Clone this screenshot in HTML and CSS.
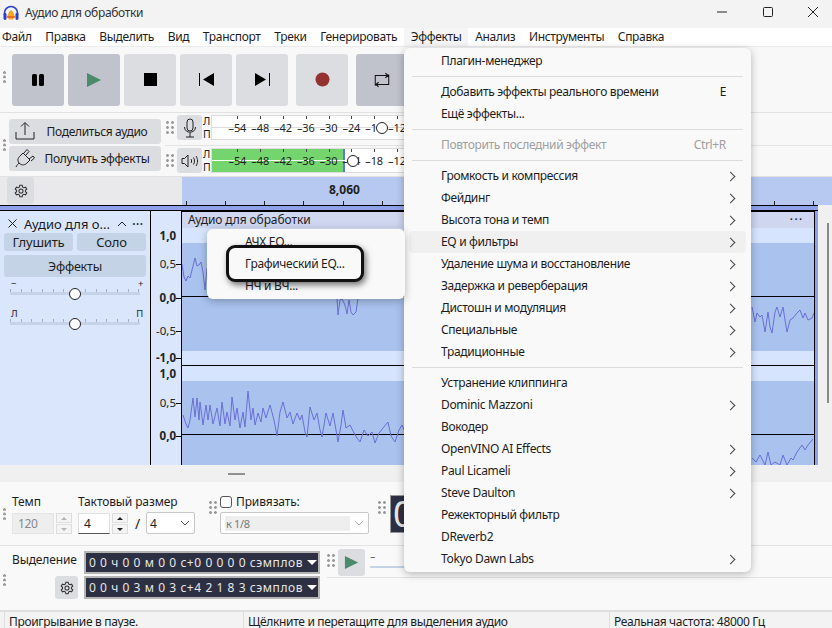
FILE: index.html
```html
<!DOCTYPE html>
<html lang="ru">
<head>
<meta charset="utf-8">
<title>Аудио для обработки</title>
<link rel="stylesheet" href="styles.css">
</head>
<body>
<div class="app">
  <header class="titlebar">
    <svg class="appicon" width="16" height="16" viewBox="0 0 16 16"><path d="M1.500 10V8a6.500 6.500 0 0 1 13 0v2" fill="none" stroke="#2a3fc7" stroke-width="1.600"/><rect x="0.500" y="8" width="3" height="7" rx="1.400" fill="#2a3fc7"/><rect x="12.500" y="8" width="3" height="7" rx="1.400" fill="#2a3fc7"/><path d="M4 11.500 6 7l2-2 2 2 2 4.500-2 3H6z" fill="#f5a623"/><path d="M4 11.500h8v1H4z" fill="#e0301e"/></svg>
    <span class="wintitle">Аудио для обработки</span>
    <div class="winctl">
      <svg width="12" height="12" viewBox="0 0 12 12"><path d="M1 6h10" stroke="#222" fill="none"/></svg>
      <svg width="12" height="12" viewBox="0 0 12 12"><rect x="1.500" y="1.500" width="9" height="9" rx="1" stroke="#222" fill="none"/></svg>
      <svg width="12" height="12" viewBox="0 0 12 12"><path d="M1 1l10 10M11 1 1 11" stroke="#222" fill="none"/></svg>
    </div>
  </header>
  <nav class="menubar">
    <span>Файл</span><span>Правка</span><span>Выделить</span><span>Вид</span><span>Транспорт</span><span>Треки</span><span>Генерировать</span><span class="open">Эффекты</span><span>Анализ</span><span>Инструменты</span><span>Справка</span>
  </nav>

  <section class="transport">
    <i class="grip single"></i>
    <button class="tbtn on"><svg width="14" height="14" viewBox="0 0 14 14"><rect x="1" y="1" width="5" height="12" rx="1.500"/><rect x="8" y="1" width="5" height="12" rx="1.500"/></svg></button>
    <button class="tbtn on"><svg width="16" height="16" viewBox="0 0 16 16"><path d="M1 1l14 7-14 7z" fill="#4b8a6b"/></svg></button>
    <button class="tbtn"><svg width="13" height="13" viewBox="0 0 13 13"><rect width="13" height="13"/></svg></button>
    <button class="tbtn"><svg width="15" height="13" viewBox="0 0 15 13"><path d="M0.500 0v13" stroke="#000" fill="none"/><path d="M15 0v13L4 6.500z"/></svg></button>
    <button class="tbtn"><svg width="15" height="13" viewBox="0 0 15 13"><path d="M14.500 0v13" stroke="#000" fill="none"/><path d="M0 0v13l11-6.500z"/></svg></button>
    <button class="tbtn rec"><svg width="15" height="15" viewBox="0 0 15 15"><circle cx="7.500" cy="7.500" r="7" fill="#943232"/></svg></button>
    <button class="tbtn on"><svg width="18" height="18" viewBox="0 0 16 16" fill="none" stroke="#111" stroke-width=".9"><path d="M2 13V4h11M11 2l2.500 2L11 6M14 3v9H3M5 10l-2.500 2L5 14"/></svg></button>
  </section>

  <section class="devices">
    <div class="sharecol">
      <i class="grip single"></i>
      <div class="sharebtns">
        <button class="share"><svg width="20" height="20" viewBox="0 0 20 20" fill="none" stroke="#222"><path d="M1 11v7h18v-7M10 14V2M6 5.500 10 1.500l4 4"/></svg><span>Поделиться аудио</span></button>
        <button class="share"><svg width="20" height="20" viewBox="0 0 20 20" fill="none" stroke="#222"><path d="M1 19c1-2 2-3 3-4M4 15c-2-3-1-5 1-7l3-3 7 7-3 3c-2 2-5 3-8 0zM8.500 5.500 12 1.500l2 2-3 3.500M14 11l4-3 1.500 2-3.500 3"/></svg><span>Получить эффекты</span></button>
      </div>
    </div>
    <div class="meters">
      <div class="meterrow first">
        <i class="grip double"></i>
        <button class="mbtn"><svg width="14" height="20" viewBox="0 0 14 20" fill="none" stroke="#222"><rect x="4" y="1" width="6" height="12" rx="3"/><path d="M1.500 9c0 7 11 7 11 0M7 15v4M3 19h8"/></svg></button>
        <div class="lr"><span>Л</span><span>П</span></div>
        <div class="meter">
          <div class="mid"></div>
          <div class="scale"><b>–54</b><b>–48</b><b>–42</b><b>–36</b><b>–30</b><b>–24</b><b>–18</b><b>–12</b></div>
          <i class="knob rk"></i>
        </div>
      </div>
      <div class="meterrow">
        <i class="grip double"></i>
        <button class="mbtn"><svg width="17" height="14" viewBox="0 0 17 14" fill="none" stroke="#222"><path d="M1 4.500h2.500L7 1v12L3.500 9.500H1zM10 5c.8 1 .8 3 0 4M12.500 3.500c1.300 2 1.300 5 0 7M15 2c2 3 2 7 0 10"/></svg></button>
        <div class="lr"><span>Л</span><span>П</span></div>
        <div class="meter play">
          <div class="green"></div>
          <div class="mid"></div>
          <div class="scale"><b>–54</b><b>–48</b><b>–42</b><b>–36</b><b>–30</b><b>–24</b><b>–18</b><b>–12</b></div>
          <i class="knob pk"></i>
        </div>
      </div>
    </div>
  </section>

  <section class="rulerbar">
    <div class="rulerleft"><button class="gear"><svg width="14" height="14" viewBox="0 0 24 24" fill="none" stroke="#333" stroke-width="1.800"><circle cx="12" cy="12" r="3.500"/><path d="M10 2h4l.6 3 2.400 1.400 2.900-1 2 3.500-2.300 2v2.200l2.300 2-2 3.500-2.900-1-2.400 1.400-.6 3h-4l-.6-3L7 17.600l-2.900 1-2-3.500 2.300-2v-2.200l-2.300-2 2-3.500 2.900 1L9.400 5z"/></svg></button></div>
    <div class="timeline"><span>8,060</span></div>
  </section>

  <section class="tracks">
    <div class="stripe"></div>
    <div class="trackrow">
      <aside class="panel">
        <div class="phead"><svg width="9" height="9" viewBox="0 0 9 9"><path d="M.5.500l8 8M8.500.500l-8 8" stroke="#222" fill="none"/></svg><span class="pname">Аудио для о...</span><svg width="10" height="6" viewBox="0 0 10 6"><path d="M1 5l4-4 4 4" stroke="#222" fill="none"/></svg><span class="pdots">···</span></div>
        <div class="pbtns"><button>Глушить</button><button>Соло</button></div>
        <button class="pfx">Эффекты</button>
        <div class="pscale"><span>−</span><span>+</span></div>
        <div class="pslider"><i></i></div>
        <div class="pscale second"><span>Л</span><span>П</span></div>
        <div class="pslider"><i></i></div>
      </aside>
      <div class="vruler">
        <b class="nt" style="top:18px">1,0</b><span style="top:46px">0,5</span><b style="top:80px">0,0</b><span style="top:113px">-0,5</span><b style="top:140px">-1,0</b>
        <b class="nt" style="top:156px">1,0</b><span style="top:185px">0,5</span><b style="top:218px">0,0</b>
      </div>
      <div class="wavecol">
        <div class="wtitle"><span>Аудио для обработки</span><span class="wdots">•••</span></div>
        <div class="lightband a"></div>
        <div class="dark"></div>
        <div class="lightband b"></div>
        <div class="lightband c"></div>
        <div class="dark"></div>
        <svg class="wave" width="632" height="253" viewBox="182 212 632 253" fill="none" stroke="#6a6fd8" stroke-width="1">
          <polyline points="182,264 184,277 186,281 188,276 190,278 192,270 195,258 197,266 199,265 201,262 203,272 205,290 207,268"/>
          <polyline points="337,299 338,315 340,300 342,299 345,305 347,314 349,300 351,312 353,315 356,312 358,298"/>
          <polyline points="752,307 755,322 757,313 760,317 762,315 765,332 768,312 770,327 772,333 775,312 777,307 780,317 783,307 785,320 787,332 790,320 793,318 797,313 800,310 803,318 805,313 808,320 812,318 814,313"/>
          <polyline points="183,415 186,424 188,428 190,420 193,398 195,417 197,398 199,420 200,402 203,425 206,405 208,420 210,405 213,424 217,408 220,426 222,402 225,424 227,412 230,426 232,397 235,420 237,408 240,428 243,412 245,427 248,391 251,420 253,408 255,425 258,413 261,422 263,408 266,418 270,405 274,420 277,436 280,412 283,402 287,418 290,412 293,424 297,413 300,420 302,415 305,432 307,437 310,407 314,420 317,413 320,430 322,437 326,413 330,426 333,413 336,430 338,442 341,425 343,410 346,428 350,425 354,433 357,438 360,442 364,430 368,436 372,432 375,443 379,433 383,428 388,422 391,436 395,442 399,430 402,425 405,432"/>
          <polyline points="752,458 756,462 760,455 765,465 768,452 771,465 775,462 780,465 783,455 787,465 791,458 793,460 797,452 802,445 805,450 808,445 813,439"/>
        </svg>
      </div>
      <div class="edge"></div>
      <div class="gutter"><i></i></div>
    </div>
  </section>

  <div class="sash"><i></i></div>

  <section class="bar1">
    <i class="grip single"></i>
    <div class="field tempo">
      <label>Темп</label>
      <div class="inline"><span class="num dis">120</span><span class="spin dis"><i class="up"></i><i class="down"></i></span></div>
    </div>
    <div class="field sig">
      <label>Тактовый размер</label>
      <div class="inline"><span class="num">4</span><span class="spin"><i class="up"></i><i class="down"></i></span><em>/</em><span class="sel"><span>4</span><svg width="10" height="6" viewBox="0 0 10 6"><path d="M1 1l4 4 4-4" stroke="#555" fill="none"/></svg></span></div>
    </div>
    <i class="grip double"></i>
    <div class="field snap">
      <div class="snapl"><i class="cb"></i><label>Привязать:</label></div>
      <span class="sel wide"><span class="selv">к 1/8</span><svg width="10" height="6" viewBox="0 0 10 6"><path d="M1 1l4 4 4-4" stroke="#aaa" fill="none"/></svg></span>
    </div>
    <i class="grip double"></i>
    <div class="clock">0</div>
  </section>

  <section class="bar2">
    <i class="grip single"></i>
    <div class="selcol">
      <label>Выделение</label>
      <button class="gear g2"><svg width="14" height="14" viewBox="0 0 24 24" fill="none" stroke="#333" stroke-width="1.800"><circle cx="12" cy="12" r="3.500"/><path d="M10 2h4l.6 3 2.400 1.400 2.900-1 2 3.500-2.300 2v2.200l2.300 2-2 3.500-2.900-1-2.400 1.400-.6 3h-4l-.6-3L7 17.600l-2.900 1-2-3.500 2.300-2v-2.200l-2.300-2 2-3.500 2.900 1L9.400 5z"/></svg></button>
    </div>
    <div class="times">
      <div class="time"><span>0 0 ч 0 0 м 0 0 с+0 0 0 0 0 <small>сэмплов</small></span><i></i></div>
      <div class="time"><span>0 0 ч 0 3 м 0 3 с+4 2 1 8 3 <small>сэмплов</small></span><i></i></div>
    </div>
    <div class="speed">
      <div class="speedtop">
        <i class="grip double"></i>
        <button class="pbtn"><svg width="15" height="15" viewBox="0 0 16 16"><path d="M1 1l14 7-14 7z" fill="#4b8a6b"/></svg></button>
        <div class="mini"><span>−</span><div></div></div>
      </div>
    </div>
  </section>

  <footer class="status">
    <span class="s1">Проигрывание в паузе.</span>
    <span class="s2">Щёлкните и перетащите для выделения аудио</span>
    <span class="s3">Реальная частота: 48000 Гц</span>
  </footer>
</div>

<div class="menu fx">
  <div class="mi"><span>Плагин-менеджер</span></div>
  <hr>
  <div class="mi"><span>Добавить эффекты реального времени</span><kbd>E</kbd></div>
  <div class="mi"><span>Ещё эффекты...</span></div>
  <hr>
  <div class="mi off"><span>Повторить последний эффект</span><kbd>Ctrl+R</kbd></div>
  <hr>
  <div class="mi sub"><span>Громкость и компрессия</span></div>
  <div class="mi sub"><span>Фейдинг</span></div>
  <div class="mi sub"><span>Высота тона и темп</span></div>
  <div class="mi sub hot"><span>EQ и фильтры</span></div>
  <div class="mi sub"><span>Удаление шума и восстановление</span></div>
  <div class="mi sub"><span>Задержка и реверберация</span></div>
  <div class="mi sub"><span>Дистошн и модуляция</span></div>
  <div class="mi sub"><span>Специальные</span></div>
  <div class="mi sub"><span>Традиционные</span></div>
  <hr>
  <div class="mi"><span>Устранение клиппинга</span></div>
  <div class="mi sub"><span>Dominic Mazzoni</span></div>
  <div class="mi"><span>Вокодер</span></div>
  <div class="mi sub"><span>OpenVINO AI Effects</span></div>
  <div class="mi sub"><span>Paul Licameli</span></div>
  <div class="mi sub"><span>Steve Daulton</span></div>
  <div class="mi"><span>Режекторный фильтр</span></div>
  <div class="mi"><span>DReverb2</span></div>
  <div class="mi sub"><span>Tokyo Dawn Labs</span></div>
</div>

<div class="menu eq">
  <div class="mi"><span>АЧХ EQ...</span></div>
  <div class="mi callout"><span>Графический EQ...</span></div>
  <div class="mi"><span>НЧ и ВЧ...</span></div>
</div>
</body>
</html>
```
FILE: styles.css
```css
* { box-sizing: border-box; }
html, body { margin: 0; padding: 0; }
body { width: 832px; height: 628px; overflow: hidden; position: relative; background: #f9f9f9; font-family: "Noto Sans", "Open Sans", sans-serif; font-size: 12px; letter-spacing: -.33px; color: #1c1c1c; }
button { font: inherit; letter-spacing: inherit; color: inherit; border: 0; padding: 0; background: #dcdde1; display: flex; align-items: center; justify-content: center; }
i, em, b { font-style: normal; display: block; }
.app { width: 832px; height: 628px; display: flex; flex-direction: column; overflow: hidden; }

.titlebar { height: 28px; background: #f3f3f3; display: flex; align-items: center; padding-left: 3px; flex: none; }
.appicon { margin-right: 6px; margin-top: -3px; }
.wintitle { color: #333; margin-top: -3px; }
.winctl { margin-left: auto; display: flex; gap: 33.500px; padding-right: 13px; margin-top: -4px; }
.winctl svg { display: block; }

.menubar { height: 18px; background: #fff; display: flex; flex: none; line-height: 18px; }
.menubar span { padding: 0 6.820px; }
.menubar span:first-child { padding-left: 2px; }
.menubar .open { background: #f5f5f5; }

.transport { height: 67px; flex: none; display: flex; align-items: center; gap: 4px; padding-left: 12px; border-top: 1px solid #ebebeb; border-bottom: 1px solid #e2e2e2; background: #f8f8f8; position: relative; }
.transport > .grip { position: absolute; left: 3px; top: 24px; }
.tbtn { width: 52px; height: 52px; border-radius: 3px; flex: none; }
.tbtn.on { background: #c0c2cc; }
.tbtn.rec { margin-left: 4px; margin-right: 4px; }
.grip { width: 3px; height: 12px; flex: none; background: radial-gradient(circle at 1.500px 1.500px, #9a9a9a 1.300px, transparent 1.500px) 0 0 / 3px 4.500px; }
.grip.double { width: 8px; height: 13px; background-size: 5px 5px; }

.devices { height: 64px; flex: none; display: flex; background: #f8f8f8; border-bottom: 1px solid #e2e2e2; }
.sharecol { width: 165px; flex: none; display: flex; align-items: center; padding-left: 3px; }
.sharecol > .grip.single { margin-right: 3px; }
.sharebtns { display: flex; flex-direction: column; gap: 2px; }
.share { width: 152px; height: 25px; border-radius: 3px; padding-left: 6px; justify-content: flex-start; }
.share svg { flex: none; }
.share span { flex: 1; text-align: center; padding-right: 2px; }
.meters { flex: 1; display: flex; flex-direction: column; }
.meterrow { height: 31px; display: flex; align-items: flex-start; padding: 2px 0 0 1px; border-top: 1px solid #e4e4e4; }
.meterrow.first { border-top: 0; height: 32px; }
.meterrow .grip { margin: 6px 3px 0 0; }
.mbtn { width: 25px; height: 25px; border-radius: 3px; flex: none; }
.lr { width: 9px; display: flex; flex-direction: column; font-size: 10.500px; line-height: 13px; padding-left: 1px; letter-spacing: 0; }
.meter { width: 440px; height: 25px; background: #fff; border: 1px solid #ddd; position: relative; flex: none; }
.meter .mid { position: absolute; left: 0; right: 0; top: 11px; height: 1px; background: #ddd; }
.meter.play .mid { background: #fff; top: 11px; }
.green { position: absolute; left: 0; top: 0; bottom: 0; width: 133px; background: #74d56f; border-right: 2px solid #5b78d6; }
.scale { position: absolute; left: 14px; top: 0; display: flex; height: 23px; align-items: center; }
.scale b { width: 22.800px; text-align: center; font-weight: 400; font-size: 11px; letter-spacing: -.1px; line-height: 15px; color: #222; position: relative; }
.scale b::before { content: ""; position: absolute; left: 50%; top: -4px; width: 1px; height: 3px; background: #444; }
.knob { position: absolute; width: 12px; height: 12px; border-radius: 50%; border: 1px solid #222; background: #fff; z-index: 1; top: 6px; }
.knob.rk { left: 164px; }
.knob.pk { left: 135px; }

.rulerbar { height: 28px; flex: none; display: flex; background: #e9e9ec; }
.rulerleft { width: 182px; flex: none; padding-left: 7px; }
.gear { width: 27px; height: 27px; border-radius: 3px; background: #dcdde1; }
.timeline { flex: 1; background: #b7c9f0 repeating-linear-gradient(90deg, transparent 0 3.800px, #222 3.800px 4.800px, transparent 4.800px 39.200px) 0 bottom / 100% 4px no-repeat; display: flex; }
.timeline span { font-weight: 700; margin-left: 147px; line-height: 26px; letter-spacing: 0; color: #222; }

.tracks { height: 260px; flex: none; display: flex; flex-direction: column; background: #f0f0f0; }
.stripe { height: 6px; flex: none; width: 818px; background: #8ea2ea; border-top: 1px solid #000; border-bottom: 1px solid #000; }
.trackrow { flex: 1; display: flex; min-height: 0; }
.panel { width: 151px; flex: none; background: #d9e6fb; border-right: 1px solid #000; padding: 0 4px; }
.phead { height: 22px; display: flex; align-items: center; padding: 3px 0 0 4px; }
.phead svg { flex: none; }
.pname { margin-left: 7px; font-size: 13px; letter-spacing: 0; flex: none; width: 93px; }
.pdots { margin-left: 5px; line-height: 1; font-size: 14px; letter-spacing: 0; }
.pbtns { display: flex; gap: 4px; }
.pbtns button { width: 69px; height: 18px; background: #c4d4e6; border-radius: 3px; font-size: 13px; letter-spacing: -.2px; line-height: 20px; }
.pfx { width: 142px; height: 22px; margin-top: 4px; background: #c4d4e6; border-radius: 3px; font-size: 12.500px; letter-spacing: -.2px; }
.pscale { display: flex; justify-content: space-between; font-size: 9.500px; padding: 0 3px 0 7px; margin-top: 1px; height: 12px; line-height: 12px; }
.pscale.second { margin-top: 13px; }
.pslider { height: 3px; margin: 2px 6px 1px; background: #c4d4e6; position: relative; }
.pslider::before { content: ""; position: absolute; left: 0; right: 0; top: -3px; height: 3px; background: repeating-linear-gradient(90deg, #9fb0c4 0 1px, transparent 1px 10.700px); }
.pslider i { position: absolute; left: 59px; top: -4px; width: 12px; height: 12px; border-radius: 50%; border: 1px solid #222; background: #fff; }
.vruler { width: 31px; flex: none; position: relative; background: #d9e6fb; border-right: 1px solid #000; }
.vruler b, .vruler span { position: absolute; right: 5px; font-size: 11.500px; line-height: 14px; letter-spacing: 0; color: #222; }
.vruler b::after, .vruler span::after { content: ""; position: absolute; left: 100%; top: 7px; width: 5px; height: 1px; background: #000; }
.vruler .nt::after { display: none; }
.wavecol { width: 633px; flex: none; display: flex; flex-direction: column; border-top: 1px solid #000; border-right: 1px solid #000; position: relative; background: #d6e4fd; overflow: hidden; }
.wtitle { height: 16px; flex: none; background: #ced6f0; display: flex; justify-content: space-between; align-items: center; padding: 0 10px 0 6px; line-height: 16px; letter-spacing: -.1px; }
.wdots { font-size: 7px; letter-spacing: 2px; }
.lightband.a { height: 15px; flex: none; }
.lightband.b { height: 14px; flex: none; }
.lightband.c { height: 16px; flex: none; border-top: 1px solid #000; }
.dark { height: 108px; flex: none; background: linear-gradient(#a9c2ee 53px, #000 53px, #000 54px, #a9c2ee 54px); }
.wave { position: absolute; left: 0; top: 0; }
.edge { width: 3px; flex: none; background: #8ea2ea; }
.gutter { flex: 1; padding: 12px 0 0 9px; }
.gutter i { width: 2px; height: 180px; background: #8a8a8a; }

.sash { height: 17px; flex: none; background: #f0f0f0; display: flex; align-items: center; padding-left: 228px; }
.sash i { width: 17px; height: 2px; background: #909090; }

.bar1 { height: 64px; flex: none; display: flex; border-bottom: 1px solid #e2e2e2; background: #f9f9f9; padding: 12px 0 0 3px; }
.bar1 > .grip.single { margin: 14px 6px 0 0; }
.field label { display: block; line-height: 16px; letter-spacing: -.12px; }
.inline { display: flex; align-items: center; margin-top: 2px; height: 22px; }
.tempo { width: 66px; }
.num { height: 21px; display: flex; align-items: center; width: 32px; padding-left: 5px; background: #fff; border: 1px solid #e0e0e0; border-bottom: 1px solid #555; flex: none; }
.num.dis { width: 42px; background: #eee; color: #888; border-color: #e4e4e4; }
.spin { width: 16px; height: 21px; margin-left: 2px; display: flex; flex-direction: column; gap: 1px; flex: none; }
.spin i { flex: 1; background: #f4f4f4; border: 1px solid #ddd; position: relative; }
.spin i::after { content: ""; position: absolute; left: 3.500px; top: 3px; border: 3.500px solid transparent; }
.spin .up::after { border-bottom-color: #222; border-top: 0; }
.spin .down::after { border-top-color: #222; border-bottom: 0; }
.spin.dis i::after { opacity: .3; }
.sig { width: 131px; }
.sig em { margin: 0 6px 0 7px; font-size: 14px; }
.sel { height: 22px; width: 49px; background: #fff; border: 1px solid #c8c8c8; border-radius: 2px; display: flex; align-items: center; justify-content: space-between; padding: 0 4px 0 3px; flex: none; }
.bar1 > .grip.double { margin: 7px 3px 0 0; }
.snap { width: 158px; }
.snapl { display: flex; align-items: center; gap: 4px; height: 16px; }
.cb { width: 12px; height: 12px; border: 1px solid #555; border-radius: 3px; background: #fff; }
.sel.wide { width: 149px; margin-top: 2px; color: #777; }
.selv { width: 125px; background: #eee; height: 15px; line-height: 15px; font-size: 11px; padding-left: 1px; margin-left: 1px; }
.clock { width: 60px; height: 38px; margin: 1px 0 0 1px; background: #2d3042; border: 1px solid #999; color: #e8e8e8; font-size: 36px; line-height: 36px; padding-left: 2px; }

.bar2 { height: 64px; flex: none; display: flex; padding-left: 3px; background: #f9f9f9; }
.bar2 > .grip.single { margin: 28px 6px 0 0; }
.selcol { width: 72px; padding-top: 6px; flex: none; }
.selcol label { display: block; line-height: 16px; letter-spacing: -.12px; }
.gear.g2 { width: 23px; height: 23px; margin: 8px 0 0 43px; }
.times { width: 236px; flex: none; display: flex; flex-direction: column; gap: 2px; padding-top: 5px; }
.time { height: 23px; background: #2d3042; border: 2px solid #b5b5b5; color: #e6e6e6; display: flex; align-items: center; justify-content: space-between; padding: 0 1px 0 3px; letter-spacing: .56px; white-space: nowrap; }
.time small { font-size: 12px; }
.time i { border: 5px solid transparent; border-top-color: #fff; border-bottom: 0; flex: none; }
.speed { flex: 1; padding-left: 7px; }
.speedtop { display: flex; height: 32px; border-bottom: 1px solid #e2e2e2; align-items: flex-start; }
.speedtop .grip { margin: 8px 3px 0 0; }
.pbtn { width: 27px; height: 27px; margin-top: 3px; border-radius: 3px; }
.mini { margin-left: 5px; width: 40px; font-size: 9px; line-height: 12px; padding-top: 6px; }
.mini div { height: 2px; background: #c4d4e6; margin-top: 2px; }

.status { height: 18px; flex: none; border-top: 2px solid #dedede; background: #f3f3f3; display: flex; line-height: 20px; overflow: hidden; }
.status span { display: block; border-left: 1px solid #dedede; }
.s1 { width: 239px; margin-left: 4px; padding-left: 4px; }
.s2 { width: 366px; padding-left: 4px; }
.s3 { flex: 1; padding-left: 4px; }

.menu { position: absolute; background: #f9f9f9; border-radius: 6px; padding: 2px 0; box-shadow: 0 2px 8px rgba(0,0,0,.28); z-index: 5; }
.menu.fx { left: 404px; top: 48px; width: 347px; height: 524px; }
.menu.eq { left: 207px; top: 229px; width: 198px; height: 70px; }
.menu hr { border: 0; height: 1px; background: #dcdcdc; margin: 4px 8px; }
.mi { height: 22px; line-height: 22px; padding-left: 37px; display: flex; justify-content: space-between; padding-right: 25px; position: relative; white-space: nowrap; }
.mi kbd { font: inherit; }
.mi.off { color: #a0a0a0; }
.mi.sub::after { content: ""; position: absolute; right: 17px; top: 8px; width: 6px; height: 6px; border-top: 1.200px solid #444; border-right: 1.200px solid #444; transform: rotate(45deg); }
.mi.hot { background: #f0f0f0; border-radius: 4px; margin: 0 5px; padding-left: 32px; }
.mi.hot::after { right: 12px; }
.menu.eq .mi { padding-left: 38px; padding-right: 0; }
.menu.eq .mi.callout { height: 37px; line-height: 31px; margin: -8px 41px -7px 19px; padding-left: 16px; background: #f9f9f9; border: 3px solid #111; border-radius: 9px; box-shadow: 2px 3px 6px rgba(0,0,0,.55); z-index: 1; }
```
